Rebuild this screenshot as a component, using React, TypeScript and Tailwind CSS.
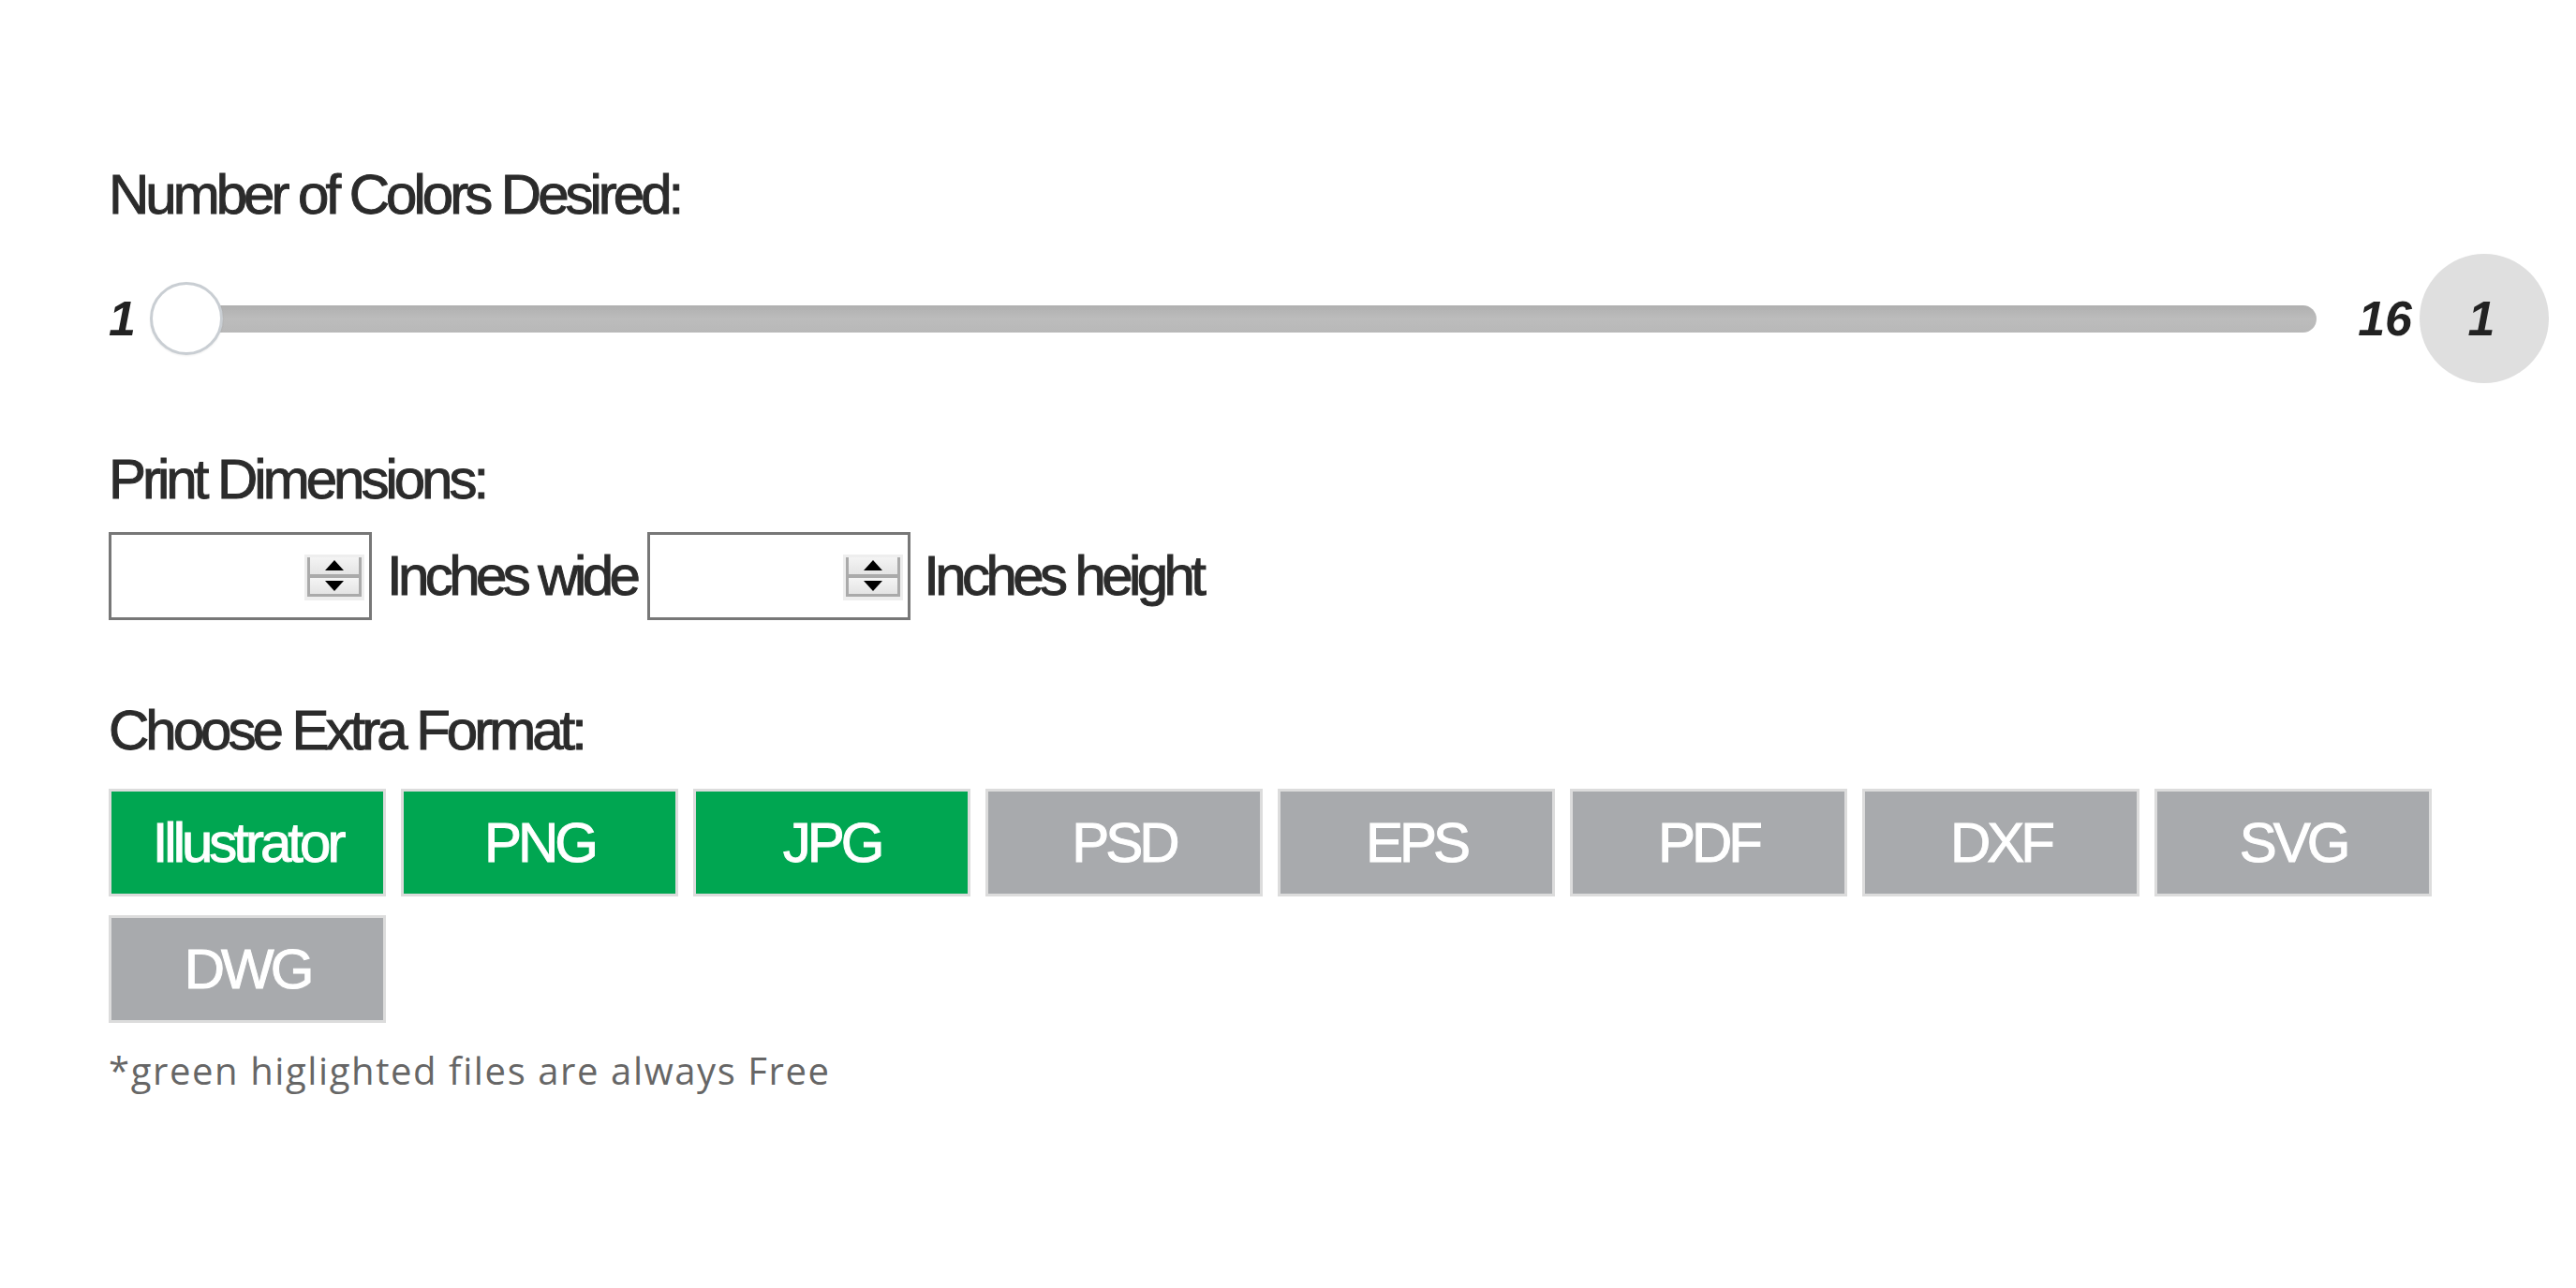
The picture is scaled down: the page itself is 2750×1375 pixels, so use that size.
import React, { useState } from 'react';

const FORMATS = [
  { name: 'Illustrator', free: true },
  { name: 'PNG', free: true },
  { name: 'JPG', free: true },
  { name: 'PSD', free: false },
  { name: 'EPS', free: false },
  { name: 'PDF', free: false },
  { name: 'DXF', free: false },
  { name: 'SVG', free: false },
  { name: 'DWG', free: false },
];

// futura-ish look: squeezed Arial with a touch of stroke for weight
const heading =
  "text-[60px] leading-[60px] tracking-[-4px] text-[#2b2b2b] [-webkit-text-stroke:1px_currentColor] font-['Liberation_Sans',Arial,sans-serif]";

function Spinner() {
  return (
    <div className="absolute right-[5px] top-[21px] w-[64px] h-[49px] bg-[#eeeeee] px-[3px] pt-[3px] pb-[4px] flex flex-col">
      <div className="flex-1 flex items-center justify-center bg-gradient-to-b from-[#f4f4f4] to-[#e4e4e4] border-x-[3px] border-[#aaaaaa] border-b-[4px]">
        <div className="w-0 h-0 border-x-[10px] border-x-transparent border-b-[11px] border-b-black" />
      </div>
      <div className="flex-1 flex items-center justify-center bg-gradient-to-b from-[#f4f4f4] to-[#e4e4e4] border-x-[3px] border-[#aaaaaa] border-b-[3px]">
        <div className="w-0 h-0 border-x-[10px] border-x-transparent border-t-[11px] border-t-black" />
      </div>
    </div>
  );
}

function DimInput({ value, onChange }: { value: string; onChange: (v: string) => void }) {
  return (
    <div className="relative w-[281px] h-[94px] border-[3px] border-[#777777] bg-white">
      <input
        value={value}
        onChange={(e) => onChange(e.target.value)}
        className="w-full h-full px-3 text-[40px] outline-none bg-transparent"
      />
      <Spinner />
    </div>
  );
}

export default function App() {
  const [width, setWidth] = useState('');
  const [height, setHeight] = useState('');
  const [colors] = useState(1);

  return (
    <div className="min-h-screen bg-white">
      <div className="w-[2721px] pl-[116px] pt-[178px]">
        {/* Colors */}
        <h2 className={heading}>Number of Colors Desired:</h2>
        <div className="mt-[33px] h-[138px] flex items-center font-['Liberation_Sans',Arial,sans-serif] text-[#222]">
          <span className="text-[52px] leading-none font-bold italic">1</span>
          <div className="relative flex-1 ml-[15px] h-[80px] flex items-center">
            <div className="ml-[39px] flex-1 h-[29px] rounded-full bg-gradient-to-b from-[#b0b0b0] via-[#bcbcbc] to-[#b8b8b8]" />
            <div className="absolute left-0 top-1/2 -translate-y-1/2 w-[78px] h-[78px] rounded-full bg-white border-[3px] border-[#c9ced3] shadow-[0_1px_2px_rgba(0,0,0,0.08)]" />
          </div>
          <span className="ml-[44px] text-[52px] leading-none font-bold italic">16</span>
          <div className="ml-[8px] w-[138px] h-[138px] rounded-full bg-[#dfdfdf] flex items-center justify-center">
            <span className="text-[52px] leading-none font-bold italic pr-[6px]">{colors}</span>
          </div>
        </div>

        {/* Dimensions */}
        <h2 className={`${heading} mt-[73px]`}>Print Dimensions:</h2>
        <div className={`mt-[26px] flex items-center ${heading}`}>
          <DimInput value={width} onChange={setWidth} />
          <span className="ml-[16px] mr-[12px] tracking-[-4.6px]">Inches wide</span>
          <DimInput value={height} onChange={setHeight} />
          <span className="ml-[14px] tracking-[-4.6px]">Inches height</span>
        </div>

        {/* Formats */}
        <h2 className={`${heading} mt-[88px]`}>Choose Extra Format:</h2>
        <div className="mt-[32px] flex flex-wrap gap-x-[16px] gap-y-[20px]">
          {FORMATS.map((f) => (
            <button
              key={f.name}
              className={`w-[296px] h-[115px] border-[3px] border-[#dcdcdc] flex items-center justify-center text-white text-[60px] leading-[60px] tracking-[-4px] [-webkit-text-stroke:1px_currentColor] font-['Liberation_Sans',Arial,sans-serif] ${
                f.free ? 'bg-[#00a651]' : 'bg-[#a8aaad]'
              }`}
            >
              {f.name}
            </button>
          ))}
        </div>
        <p className="mt-[27px] text-[40px] leading-[48px] tracking-[1.6px] text-[#666666] font-['Open_Sans',sans-serif]">
          *green higlighted files are always Free
        </p>
      </div>
    </div>
  );
}
